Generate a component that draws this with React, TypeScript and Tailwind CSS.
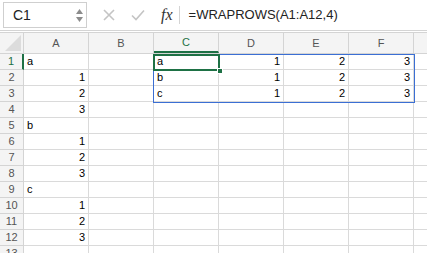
import React from 'react';

const COLS = ['A', 'B', 'C', 'D', 'E', 'F', 'G'];

type Cell = { v: string; num?: boolean };

// column A holds the source list, C:F the WRAPROWS spill
const data: Record<number, Record<string, Cell>> = {
  1: { A: { v: 'a' }, C: { v: 'a' }, D: { v: '1', num: true }, E: { v: '2', num: true }, F: { v: '3', num: true } },
  2: { A: { v: '1', num: true }, C: { v: 'b' }, D: { v: '1', num: true }, E: { v: '2', num: true }, F: { v: '3', num: true } },
  3: { A: { v: '2', num: true }, C: { v: 'c' }, D: { v: '1', num: true }, E: { v: '2', num: true }, F: { v: '3', num: true } },
  4: { A: { v: '3', num: true } },
  5: { A: { v: 'b' } },
  6: { A: { v: '1', num: true } },
  7: { A: { v: '2', num: true } },
  8: { A: { v: '3', num: true } },
  9: { A: { v: 'c' } },
  10: { A: { v: '1', num: true } },
  11: { A: { v: '2', num: true } },
  12: { A: { v: '3', num: true } },
};

const rows = Array.from({ length: 13 }, (_, i) => i + 1);

export default function App() {
  return (
    <div className="w-[427px] h-[253px] overflow-hidden bg-white font-['Liberation_Sans',Arial,sans-serif] text-black">
      {/* Formula bar */}
      <div className="h-[31px] flex items-center border-b border-[#d4d4d4] bg-white">
        <div className="ml-[3px] w-[84px] h-[26px] border border-[#cfcfcf] flex items-center">
          <span className="ml-[9px] flex-1 text-[14px] text-[#222]">C1</span>
          <div className="mr-[3px] flex flex-col items-center gap-[3px]">
            <svg width="7" height="5" viewBox="0 0 7 5">
              <path d="M3.5 0 L7 5 L0 5 Z" fill="#8c8c8c" />
            </svg>
            <svg width="7" height="5" viewBox="0 0 7 5">
              <path d="M0 0 L7 0 L3.5 5 Z" fill="#8c8c8c" />
            </svg>
          </div>
        </div>
        <div className="ml-[16px] w-[12px] h-[12px]">
          <svg width="12" height="12" viewBox="0 0 12 12">
            <path d="M1 1 L11 11 M11 1 L1 11" stroke="#c4c4c4" strokeWidth="1.6" />
          </svg>
        </div>
        <div className="ml-[16px] w-[14px] h-[12px]">
          <svg width="14" height="12" viewBox="0 0 14 12">
            <path d="M1 6.5 L5 10.5 L13 1.5" stroke="#c4c4c4" strokeWidth="1.6" fill="none" />
          </svg>
        </div>
        <span className="ml-[16px] text-[16px] italic text-[#333] font-['Liberation_Serif',serif] leading-none">
          fx
        </span>
        <div className="ml-[6px] w-px h-[18px] bg-[#d4d4d4]" />
        <span className="ml-[9px] text-[13px] text-[#222]">=WRAPROWS(A1:A12,4)</span>
      </div>

      <div className="h-[1px] bg-white" />

      {/* Grid */}
      <div className="relative">
        <div className="flex h-[22px] bg-[#f4f4f4] border-t border-b border-[#d4d4d4]">
          <div className="w-[24px] shrink-0 border-r border-[#d4d4d4] relative">
            <svg className="absolute right-[2px] bottom-[2px]" width="16" height="16" viewBox="0 0 16 16">
              <path d="M16 0 L16 16 L0 16 Z" fill="#dcdcdc" />
            </svg>
          </div>
          {COLS.map((c) => (
            <div
              key={c}
              className={`${c === 'G' ? 'flex-1' : 'w-[65px] shrink-0 border-r border-[#d4d4d4]'} flex items-center justify-center text-[11px] ${
                c === 'C' ? 'text-[#1e7145] border-b-2 border-b-[#1e7145]' : 'text-[#555]'
              }`}
            >
              {c === 'G' ? '' : c}
            </div>
          ))}
        </div>

        {rows.map((r) => (
          <div key={r} className="flex h-[16px]">
            <div
              className={`w-[24px] shrink-0 bg-[#f4f4f4] border-b border-r border-[#d4d4d4] flex items-center justify-center text-[11px] ${
                r === 1 ? 'text-[#1e7145] border-r-2 border-r-[#1e7145]' : 'text-[#555]'
              }`}
            >
              {r}
            </div>
            {COLS.map((c) => {
              const cell = data[r]?.[c];
              return (
                <div
                  key={c}
                  className={`${c === 'G' ? 'flex-1' : 'w-[65px] shrink-0 border-r'} border-b border-[#dadada] flex items-center px-[3px] text-[11px] ${
                    cell?.num ? 'justify-end' : 'justify-start'
                  }`}
                >
                  {cell?.v}
                </div>
              );
            })}
          </div>
        ))}

        {/* spill range */}
        <div className="absolute left-[153px] top-[22px] w-[262px] h-[49px] border border-[#3b6fd4] pointer-events-none" />
        {/* active cell */}
        <div className="absolute left-[153px] top-[22px] w-[67px] h-[17px] border-2 border-[#1e7145] pointer-events-none" />
        <div className="absolute left-[217px] top-[36px] w-[6px] h-[6px] bg-[#1e7145] border border-white pointer-events-none" />
      </div>
    </div>
  );
}
